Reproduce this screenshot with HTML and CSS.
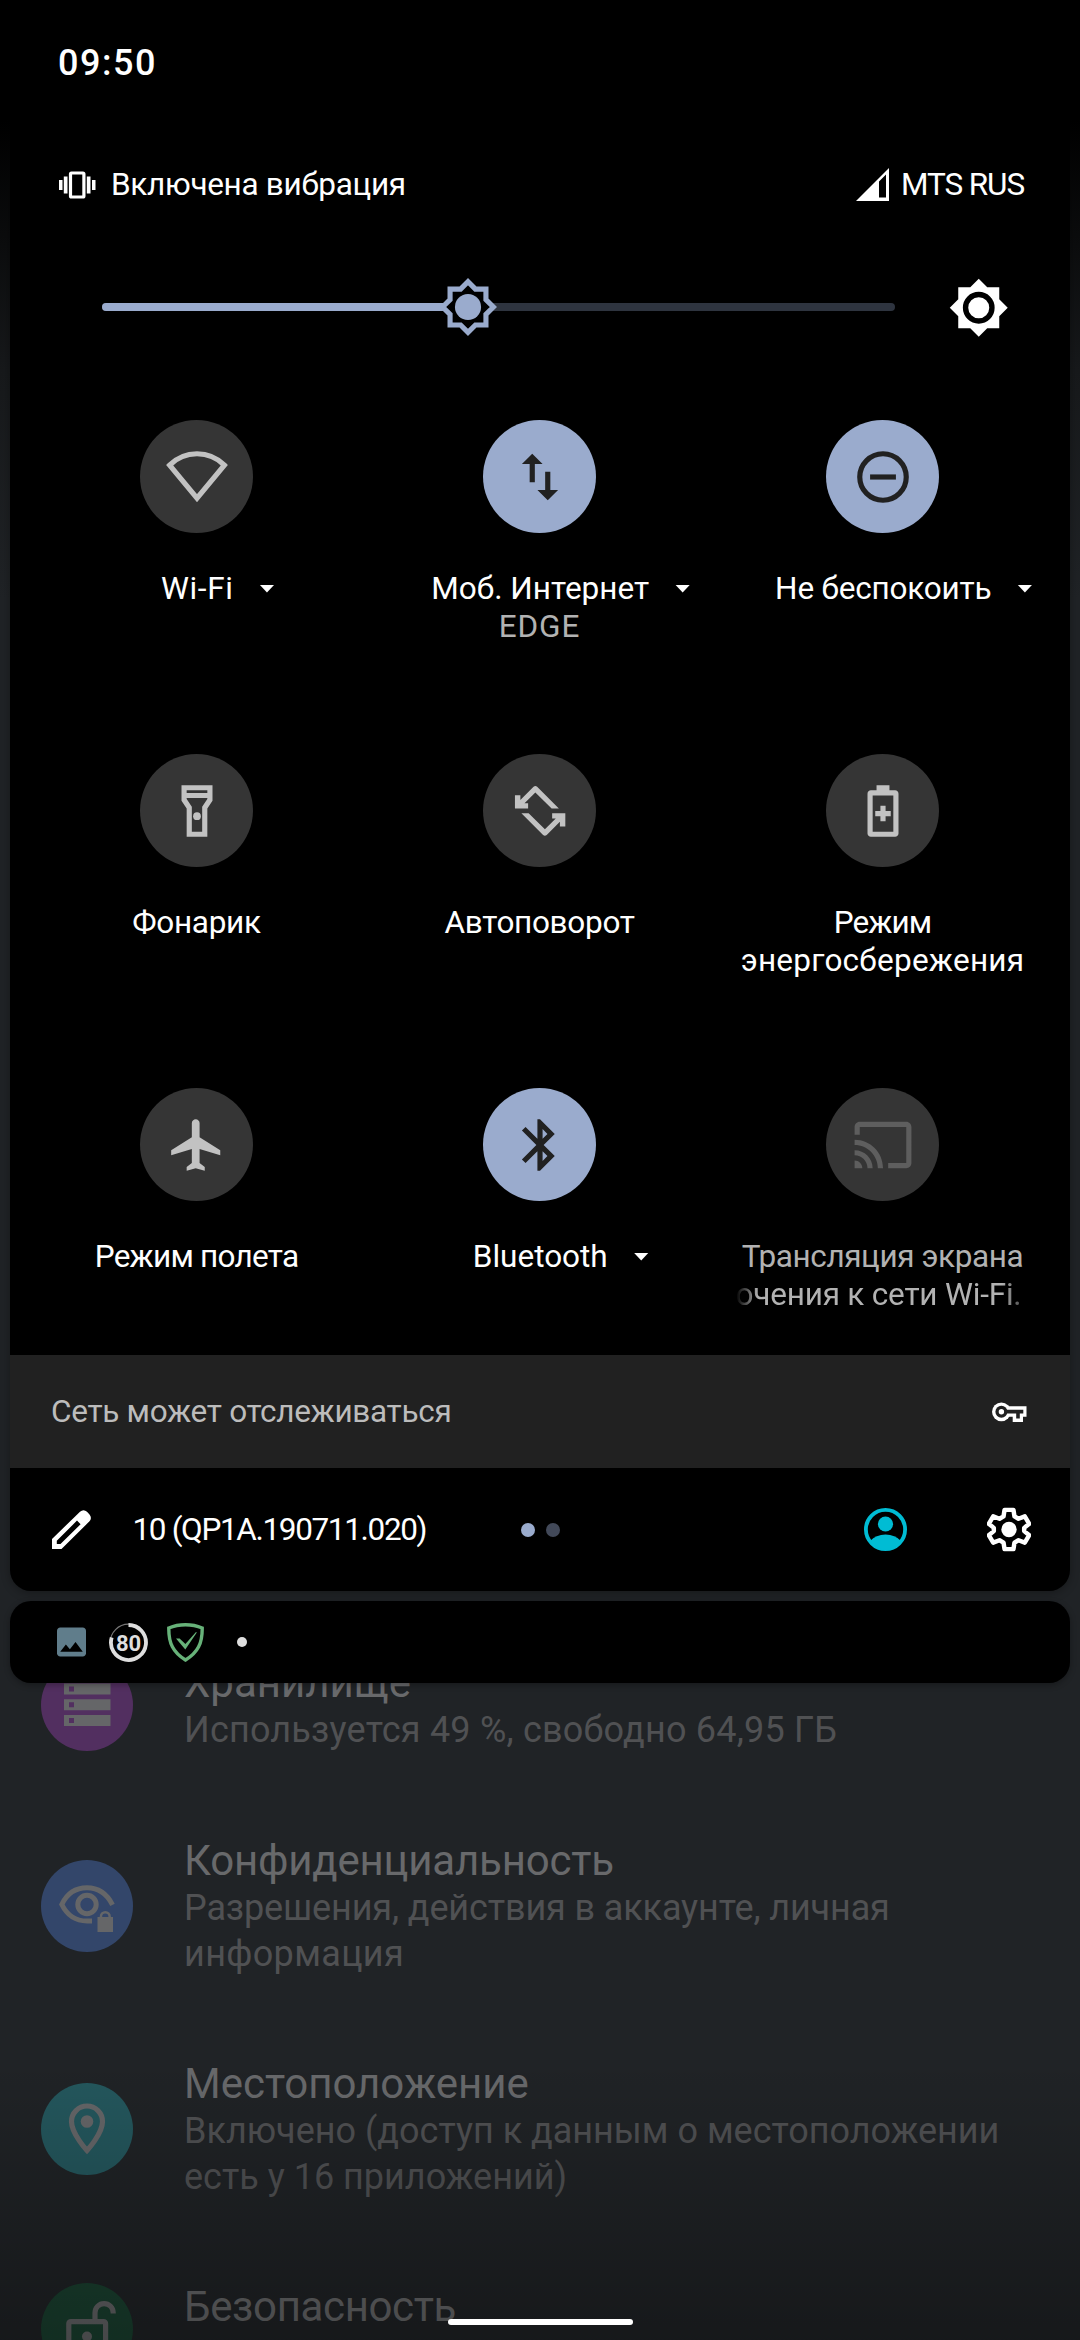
FILE: index.html
```html
<!DOCTYPE html>
<html lang="ru">
<head>
<meta charset="utf-8">
<title>Быстрые настройки</title>
<link rel="stylesheet" href="styles.css">
</head>
<body>
<div class="screen">

  <main class="settings">
    <section class="item">
      <svg class="badge storage" viewBox="0 0 92 92"><path fill="currentColor" fill-rule="evenodd" d="M23 24.5h46.5v11H23zM23 40.3h46.5v11H23zM23 56h46.5v11H23zM28 27.5v5h5v-5zM28 43.3v5h5v-5zM28 59v5h5v-5z"/></svg>
      <div>
        <h2 class="title">Хранилище</h2>
        <p class="sub wide">Используется 49 %, свободно 64,95 ГБ</p>
      </div>
    </section>
    <section class="item">
      <svg class="badge privacy" viewBox="0 0 92 92"><g fill="none" stroke="currentColor" stroke-width="5"><path d="M71.5 44.8C66 34 57 27.8 46 27.8S26 33.5 20.8 44.5C26 55 35 61 46 61h5"/><circle cx="46" cy="44.5" r="9.2"/></g><path fill="currentColor" fill-rule="evenodd" d="M56.5 57h2.2v-.5a5.6 5.6 0 0 1 11.2 0v.5H72v15H56.5zM61.2 57h6.2v-.5a3.1 3.1 0 0 0-6.2 0z"/></svg>
      <div>
        <h2 class="title t-conf">Конфиденциальность</h2>
        <p class="sub">Разрешения, действия в аккаунте, личная<br><span class="s-info">информация</span></p>
      </div>
    </section>
    <section class="item">
      <svg class="badge location" viewBox="0 0 92 92"><path fill="none" stroke="currentColor" stroke-width="5.2" d="M46 67.5S30.5 50.8 30.5 38.5a15.5 15.5 0 0 1 31 0C61.5 50.8 46 67.5 46 67.5z"/><circle cx="46" cy="38.5" r="6.3" fill="currentColor"/></svg>
      <div>
        <h2 class="title">Местоположение</h2>
        <p class="sub loc">Включено (доступ к данным о местоположении<br>есть у 16 приложений)</p>
      </div>
    </section>
    <section class="item">
      <svg class="badge security" viewBox="0 0 92 92"><g fill="none" stroke="currentColor" stroke-width="5.2"><rect x="27.8" y="38.6" width="36.8" height="34" rx="2"/><path d="M54 38V29.7a9.1 9.1 0 0 1 18.2 0v.8"/></g><circle cx="46" cy="53.5" r="5" fill="currentColor"/></svg>
      <h2 class="title t-sec">Безопасность</h2>
    </section>
  </main>

  <div class="fade"></div>

  <div class="shade">
    <div class="panel">
      <header class="status">09:50</header>

      <div class="carrier">
        <svg class="vibrate" viewBox="0 0 37 28"><path fill="#fff" d="M0 9h3.5v10H0zM4.8 5.5h3.7v17H4.800zM27.8 5.5h3.7v17h-3.700zM33 9h3.5v10H33z"/><rect x="11.5" y="2" width="13.4" height="24" rx="1" fill="none" stroke="#fff" stroke-width="3.2"/></svg>
        <span class="ringer">Включена вибрация</span>
        <svg class="signal" viewBox="0 0 33 33"><path fill="#fff" fill-rule="evenodd" d="M33 0v33H0zM30 6.5l-7 7v16h7z"/></svg>
        <span class="operator">MTS RUS</span>
      </div>

      <div class="brightness">
        <div class="track">
          <div class="level" style="width:46.2%"></div>
          <svg class="thumb" viewBox="0 0 24 24"><path fill="#000" stroke="#9aabcd" stroke-width="2" d="M19 9.1V5h-4.1L12 2.1 9.1 5H5v4.1L2.1 12 5 14.9V19h4.1L12 21.9 14.9 19H19v-4.1L21.9 12z"/><circle cx="12" cy="12" r="5.1" fill="#9aabcd"/></svg>
        </div>
        <svg class="auto" viewBox="0 0 24 24"><path fill="#fff" d="M20 8.69V4h-4.69L12 .69 8.69 4H4v4.69L.69 12 4 15.31V20h4.69L12 23.31 15.31 20H20v-4.69L23.31 12z"/><circle cx="12" cy="12" r="5.15" fill="#fff" stroke="#000" stroke-width="2.1"/></svg>
      </div>

      <div class="tiles">
        <div class="tile">
          <div class="disc"><svg class="icon" viewBox="0 0 24 24"><path fill="none" stroke="currentColor" stroke-width="2" d="M1.4 7.4C4.2 4.6 8 3 12 3s7.8 1.6 10.6 4.4L12 20.2z"/></svg></div>
          <div class="label more l-wifi">Wi-Fi</div>
        </div>
        <div class="tile on">
          <div class="disc"><svg class="icon" viewBox="0 0 24 24"><path fill="currentColor" d="M16 17.01V10h-2v7.01h-3L15 21l4-3.99h-3zM9 3L5 6.99h3V14h2V6.99h3L9 3z"/></svg></div>
          <div class="label more">Моб. Интернет</div>
          <div class="label dim l-edge">EDGE</div>
        </div>
        <div class="tile on">
          <div class="disc"><svg class="icon" viewBox="0 0 24 24"><circle cx="12" cy="12" r="9" fill="none" stroke="currentColor" stroke-width="2"/><path fill="currentColor" d="M7 11h10v2H7z"/></svg></div>
          <div class="label more l-dnd">Не беспокоить</div>
        </div>

        <div class="tile">
          <div class="disc"><svg class="icon" viewBox="0 0 24 24"><path fill="currentColor" d="M18 2H6v6l2 3v11h8V11l2-3V2zm-2 2v1H8V4h8zm-2 6.4V20h-4v-9.61l-2-3V7h8v.39l-2 3.01z"/><circle cx="12" cy="14" r="1.5" fill="currentColor"/></svg></div>
          <div class="label tight">Фонарик</div>
        </div>
        <div class="tile">
          <div class="disc"><svg class="icon" viewBox="0 0 24 24"><g fill="currentColor"><path d="M9.5 2.6Q10.2 2 10.9 2.6L19.3 11H16.5L10.2 4.8 6 9H7.4V11H2.3V5.9H4.4V7.7z"/><path transform="rotate(180 12.05 11.95)" d="M9.5 2.6Q10.2 2 10.9 2.6L19.3 11H16.5L10.2 4.8 6 9H7.4V11H2.3V5.9H4.4V7.7z"/></g></svg></div>
          <div class="label tight">Автоповорот</div>
        </div>
        <div class="tile">
          <div class="disc"><svg class="icon" viewBox="0 0 24 24"><path fill="currentColor" fill-rule="evenodd" d="M16.7 4H14.5V2h-5v2H7.3C6.6 4 6 4.6 6 5.3v15.4c0 .7.6 1.3 1.3 1.3h9.4c.7 0 1.3-.6 1.3-1.3V5.3c0-.7-.6-1.3-1.3-1.3zM16 20H8V6h8z"/><path fill="currentColor" d="M11 10h2v2h2v2h-2v2h-2v-2H9v-2h2z"/></svg></div>
          <div class="label"><span class="l-mode">Режим</span><br><span class="l-saver">энергосбережения</span></div>
        </div>

        <div class="tile">
          <div class="disc"><svg class="icon" viewBox="0 0 24 24"><path fill="currentColor" d="M21 16v-2l-8-5V3.5c0-.83-.67-1.5-1.5-1.5S10 2.67 10 3.5V9l-8 5v2l8-2.5V19l-2 1.5V22l3.5-1 3.5 1v-1.5L13 19v-5.5l8 2.5z"/></svg></div>
          <div class="label l-plane">Режим полета</div>
        </div>
        <div class="tile on">
          <div class="disc"><svg class="icon" viewBox="0 0 24 24"><path fill="currentColor" d="M17.71 7.71L12 2h-1v7.59L6.41 5 5 6.41 10.59 12 5 17.59 6.41 19 11 14.41V22h1l5.71-5.71-4.3-4.29 4.3-4.29zM13 5.83l1.88 1.88L13 9.59V5.83zm1.88 10.46L13 18.17v-3.76l1.88 1.88z"/></svg></div>
          <div class="label more">Bluetooth</div>
        </div>
        <div class="tile off">
          <div class="disc"><svg class="icon" viewBox="0 0 24 24"><path fill="currentColor" d="M21 3H3c-1.1 0-2 .9-2 2v3h2V5h18v14h-7v2h7c1.1 0 2-.9 2-2V5c0-1.1-.9-2-2-2zM1 18v3h3c0-1.66-1.34-3-3-3zm0-4v2c2.76 0 5 2.24 5 5h2c0-3.87-3.13-7-7-7zm0-4v2c4.97 0 9 4.03 9 9h2c0-6.08-4.93-11-11-11z"/></svg></div>
          <div class="label dim l-cast">Трансляция экрана</div>
          <div class="label dim marquee">очения к сети Wi-Fi.</div>
        </div>
      </div>

      <div class="monitor">
        <span>Сеть может отслеживаться</span>
        <svg class="key" viewBox="0 0 34.5 20"><path fill="#fff" d="M14 4.3h20.5v10.4H31V20H20.7v-5.3H14z"/><circle cx="9.4" cy="9.8" r="9.4" fill="#fff"/><path fill="#212121" d="M12 7.8h19.3v3.6h-3.5v5h-3.6v-5H12z"/><circle cx="9.4" cy="9.8" r="6" fill="#212121"/><circle cx="9.4" cy="9.8" r="2.7" fill="#fff"/></svg>
      </div>

      <footer class="footer">
        <svg class="pencil" viewBox="0 0 39 39"><path fill="#fff" fill-rule="evenodd" d="M0 39V29L28 1.7Q31.5-1.4 35 1.7L37.5 4.5Q40.3 8 37.5 11.3L9.5 39zM4.8 34h3.7L28.6 14.2 25 10.6 4.8 30.8z"/></svg>
        <span class="build">10 (QP1A.190711.020)</span>
        <span class="dot active"></span><span class="dot"></span>
        <svg class="user" viewBox="0 0 43 43"><circle cx="21.5" cy="21.5" r="19.6" fill="none" stroke="#00bcd4" stroke-width="3.8"/><circle cx="21.5" cy="16" r="7.6" fill="#00bcd4"/><path fill="#00bcd4" d="M6 33Q12 26.5 21.5 26.5T37 33Q31 41.5 21.5 41.5T6 33z"/></svg>
        <svg class="gear" viewBox="2 2 20 20"><path transform="translate(12 12) scale(.92) translate(-12 -12)" fill="none" stroke="#fff" stroke-width="2.2" stroke-linejoin="round" d="M9.8 2.3h4.4l.5 3.2 2 1.2 3.1-1.2 2.2 3.7-2.5 2v1.6l2.5 2-2.2 3.700-3.100-1.200-2 1.200-.5 3.200H9.800l-.5-3.200-2-1.200-3.100 1.200-2.200-3.700 2.500-2v-1.600L2 9.200l2.200-3.700 3.100 1.200 2-1.200z"/><circle cx="12" cy="12" r="3.5" fill="#fff"/></svg>
      </footer>
    </div>

    <div class="notes">
      <svg class="photo" viewBox="3 3 18 18"><path fill="#607d8b" d="M21 19V5c0-1.1-.9-2-2-2H5c-1.1 0-2 .9-2 2v14c0 1.1.9 2 2 2h14c1.1 0 2-.9 2-2z"/><path d="M8.5 13.5l2.5 3.01L14.5 12l4.5 6H5l3.5-4.5z"/></svg>
      <svg class="charge" viewBox="0 0 39 39"><circle cx="19.5" cy="19.5" r="18.3" fill="none" stroke="#777" stroke-width="1.2"/><path fill="none" stroke="#dedede" stroke-width="3.8" d="M19.5 2A17.5 17.5 0 1 1 2.7 14.5"/><text class="percent" x="19.5" y="27.5" text-anchor="middle">80</text></svg>
      <svg class="shield" viewBox="0 0 37 39"><path fill="none" stroke="#67b279" stroke-width="3.4" d="M1.800 5Q9.500 1.700 18.500 1.700T35.200 5C35.400 20 31 29.500 18.500 37 6 29.500 1.600 20 1.800 5z"/><path fill="#67b279" d="M9 15.500h3.600l5.800 5.500L29 9l.8.600L18.300 26.400z"/></svg>
      <span class="more-dot"></span>
    </div>

    <div class="home"></div>
  </div>
</div>
</body>
</html>
```
FILE: styles.css
```css
* { box-sizing: border-box; margin: 0; padding: 0; }
body { background: #202326; font-family: Roboto, sans-serif; font-size: 31.5px; line-height: 38px; color: #fff; }
svg { display: block; flex: none; }

.screen { display: grid; width: 1080px; height: 2340px; overflow: hidden; background: linear-gradient(#000 110px, #17191b 370px, #202326 600px); }
.settings, .fade, .shade { grid-area: 1 / 1; height: 2340px; min-width: 0; }

/* dimmed settings list behind the shade */
.settings { display: flex; flex-direction: column; gap: 82px; padding: 1658px 41px 0; overflow: hidden; }
.item { display: flex; align-items: center; gap: 51px; flex: none; min-height: 96px; color: #656668; }
.badge { width: 92px; height: 92px; margin-top: -2px; border-radius: 50%; }
.storage { background: #522f60; }
.privacy { background: #33466a; }
.location { background: #24575d; }
.security { background: #1a4130; }
.title { font-size: 42px; line-height: 50px; font-weight: 400; color: #68696b; align-self: flex-start; }
.t-conf { letter-spacing: -.2px; }
.t-sec { letter-spacing: -.35px; }
.sub { font-size: 36px; line-height: 45.5px; color: #505153; letter-spacing: -.12px; white-space: nowrap; }
.wide { letter-spacing: .2px; }
.s-info { letter-spacing: .35px; }
.loc { letter-spacing: 0; }
.fade { background: linear-gradient(transparent 2060px, rgba(0, 0, 0, .3) 2340px); }

.shade { display: flex; flex-direction: column; padding: 0 10px; }
.panel { background: #000; border-radius: 0 0 21px 21px; box-shadow: 0 2px 10px rgba(0, 0, 0, .3); }
.status { height: 165px; padding: 42px 0 0 48px; font-size: 36px; line-height: 42px; font-weight: 500; letter-spacing: 1.5px; }

.carrier { display: flex; align-items: center; height: 40px; padding: 0 46px 0 48.5px; }
.vibrate { width: 37px; height: 28px; }
.ringer { margin-left: 15.5px; letter-spacing: -.3px; }
.signal { width: 33px; height: 33px; margin-left: auto; margin-top: -2px; }
.operator { margin-left: 12px; letter-spacing: -1.1px; }

.brightness { display: flex; align-items: center; justify-content: space-between; height: 61.5px; margin-top: 71.5px; padding: 0 61px 0 92px; }
.track { position: relative; width: 793px; height: 8px; border-radius: 4px; background: #2e343f; }
.level { height: 8px; border-radius: 4px; background: #9aabcd; }
.thumb { position: absolute; left: 46.2%; top: 50%; width: 61.5px; height: 61.5px; transform: translate(-50%, -50%); }
.auto { width: 61.5px; height: 61.5px; }

.tiles { display: grid; grid-template-columns: repeat(3, 343px); grid-template-rows: 334px 334px 267px; padding-left: 15px; margin-top: 82px; }
.tile { display: flex; flex-direction: column; align-items: center; color: #c2c2c2; }
.on { color: #212121; }
.off { color: #5e5e5e; }
.disc { display: grid; place-items: center; width: 113px; height: 113px; margin-bottom: 36.5px; border-radius: 50%; background: #353535; }
.on .disc { background: #9aabcd; }
.icon { width: 62px; height: 62px; }
.label { color: #fff; text-align: center; white-space: nowrap; }
.dim { color: #b2b2b2; }
.more { display: flex; align-items: center; }
.more::before { content: ""; width: 42.5px; }
.more::after { content: ""; width: 15px; height: 8px; margin-left: 26px; background: #fff; clip-path: polygon(0 0, 100% 0, 50% 100%); }
.l-wifi { letter-spacing: .6px; }
.l-edge { letter-spacing: .9px; }
.l-dnd { letter-spacing: -.2px; }
.tight { letter-spacing: -.3px; }
.l-mode { letter-spacing: -.9px; }
.l-saver { letter-spacing: .25px; }
.l-plane { letter-spacing: -.75px; }
.l-cast { letter-spacing: -.4px; }
.marquee { width: 294px; overflow: hidden; text-align: left; letter-spacing: -.2px; -webkit-mask: linear-gradient(90deg, transparent, #000 22px, #000 266px, transparent 300px); mask: linear-gradient(90deg, transparent, #000 22px, #000 266px, transparent 300px); }

.monitor { display: flex; align-items: center; justify-content: space-between; height: 113px; padding: 0 43.5px 0 41px; background: #212121; color: #bcbcbc; letter-spacing: -.3px; }
.key { width: 34.5px; height: 20px; }

.footer { display: flex; align-items: center; height: 123px; padding: 0 39.5px 0 42px; }
.pencil { width: 39px; height: 39px; }
.build { width: 388px; margin-left: 41.5px; letter-spacing: -1.35px; }
.dot { width: 14px; height: 14px; margin-right: 11px; border-radius: 50%; background: #424959; }
.dot.active { background: #9aabcd; }
.user { width: 43px; height: 43px; margin-left: auto; }
.gear { width: 44px; height: 45px; margin-left: 79.5px; }

.notes { display: flex; align-items: center; height: 82px; margin-top: 10px; padding-left: 47px; background: #000; border-radius: 21px; box-shadow: 0 2px 6px rgba(0, 0, 0, .3); }
.photo { width: 29px; height: 30px; }
.charge { width: 39px; height: 39px; margin-left: 23px; }
.percent { font: 700 22px Roboto, sans-serif; fill: #dedede; }
.shield { width: 37px; height: 39px; margin-left: 19px; }
.more-dot { width: 10px; height: 10px; margin-left: 33px; border-radius: 50%; background: #dedede; }

.home { width: 185px; height: 6px; margin: auto auto 15px; border-radius: 3px; background: #fff; }
```
